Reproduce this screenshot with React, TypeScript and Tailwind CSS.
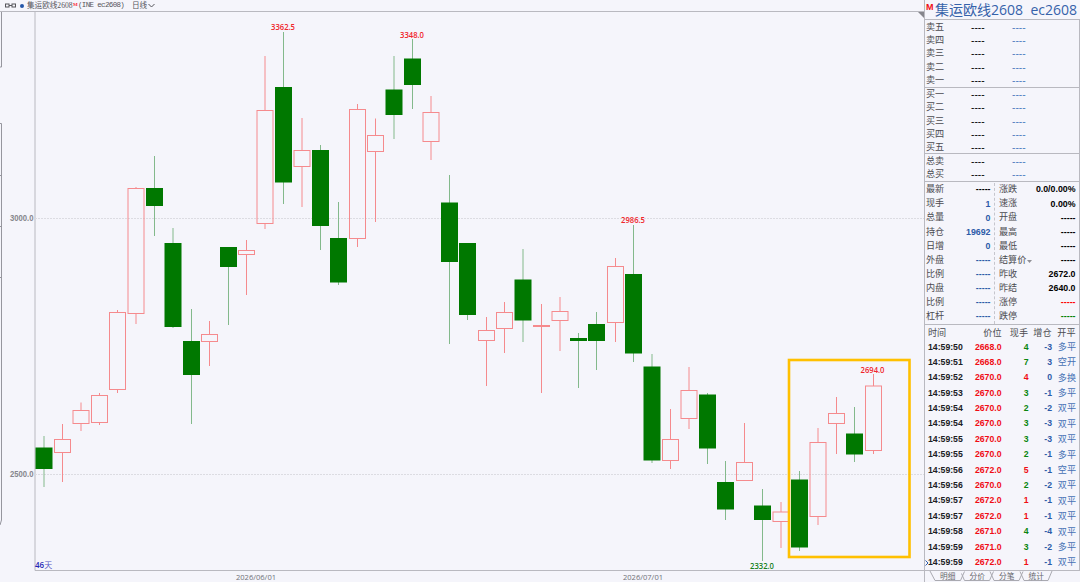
import React from 'react';
import clsx from 'clsx';

// x centre, high, body top, body bottom, low, direction
type Candle = [number, number, number, number, number, 'u' | 'd'];

const candles: Candle[] = [
  [44, 436, 447.5, 469, 487, 'd'],
  [62.5, 424, 439.5, 452.5, 482, 'u'],
  [81, 402.5, 410.5, 423.5, 431, 'u'],
  [99.5, 393, 395.5, 422.5, 425, 'u'],
  [117.5, 310, 312.5, 389.5, 393, 'u'],
  [136, 187, 188.5, 313.5, 324, 'u'],
  [154.5, 156, 188, 206, 236, 'd'],
  [173, 228, 243, 327, 328, 'd'],
  [191.5, 309, 341, 375, 424, 'd'],
  [209.5, 321, 334.5, 341.5, 366, 'u'],
  [228.5, 247, 247, 267, 325, 'd'],
  [246.5, 240, 250.5, 254.5, 295, 'u'],
  [265, 56, 110.5, 223.5, 229, 'u'],
  [283.5, 32, 87, 182.5, 204, 'd'],
  [302, 118, 150.5, 166.5, 207, 'u'],
  [320.5, 145, 150, 226, 250, 'd'],
  [338.5, 202, 238, 282.5, 285, 'd'],
  [357.5, 104, 109.5, 238.5, 247, 'u'],
  [375.5, 118.5, 135.5, 151.5, 222, 'u'],
  [394, 56, 89.5, 115, 139, 'd'],
  [412.5, 39, 58.5, 85, 109, 'd'],
  [431, 96, 112.5, 141.5, 160, 'u'],
  [449.5, 175, 202.5, 262, 344, 'd'],
  [467.5, 243, 243, 315, 320, 'd'],
  [486.5, 317, 330.5, 340.5, 386, 'u'],
  [504.5, 302, 312.5, 328.5, 353, 'u'],
  [523, 249, 279.5, 320.5, 342, 'd'],
  [541.5, 304, 325.5, 326.5, 393, 'u'],
  [560, 297, 311.5, 320.5, 351, 'u'],
  [578.5, 333, 338, 341, 388, 'd'],
  [596.5, 312, 324, 341, 370, 'd'],
  [615.5, 258, 266.5, 322.5, 342, 'u'],
  [633.5, 225, 274, 353.5, 362, 'd'],
  [652, 354, 366.5, 460.5, 463, 'd'],
  [670.5, 409, 439.5, 460.5, 469, 'u'],
  [689, 367, 390.5, 418.5, 429, 'u'],
  [707.5, 393, 394.5, 448.5, 464, 'd'],
  [725.5, 461, 482, 509.5, 520, 'd'],
  [744.5, 423, 462.5, 480.5, 481, 'u'],
  [762.5, 489, 505.5, 520, 561, 'd'],
  [781, 502, 512, 521.5, 548, 'u'],
  [799.5, 471, 479.5, 547.5, 551, 'd'],
  [818, 428, 442.5, 516.5, 525, 'u'],
  [836.5, 397, 413.5, 423.5, 454, 'u'],
  [854.5, 407, 433.5, 454.5, 462, 'd'],
  [873.5, 374, 386, 450.5, 454, 'u'],
];

const extremes = [
  { x: 283, y: 30, text: '3362.5', up: true },
  { x: 412, y: 37.5, text: '3348.0', up: true },
  { x: 633, y: 223, text: '2986.5', up: true },
  { x: 872.5, y: 373, text: '2694.0', up: true },
  { x: 762, y: 569, text: '2332.0', up: false },
];

const asks = ['卖五', '卖四', '卖三', '卖二', '卖一'];
const bids = ['买一', '买二', '买三', '买四', '买五'];
const totals = ['总卖', '总买'];

const BLUE = 'text-[#2d5ba8]';

const leftStats = [
  ['最新', '-----', 'text-black'],
  ['现手', '1', BLUE],
  ['总量', '0', BLUE],
  ['持仓', '19692', BLUE],
  ['日增', '0', BLUE],
  ['外盘', '-----', BLUE],
  ['比例', '-----', BLUE],
  ['内盘', '-----', BLUE],
  ['比例', '-----', BLUE],
  ['杠杆', '-----', BLUE],
];

const rightStats = [
  ['涨跌', '0.0/0.00%', 'text-black'],
  ['速涨', '0.00%', 'text-black'],
  ['开盘', '-----', 'text-black'],
  ['最高', '-----', 'text-black'],
  ['最低', '-----', 'text-black'],
  ['结算价', '-----', 'text-black'],
  ['昨收', '2672.0', 'text-black'],
  ['昨结', '2640.0', 'text-black'],
  ['涨停', '-----', 'text-[#ff0000]'],
  ['跌停', '-----', 'text-[#008000]'],
];

const ticks: [string, string, string, 'r' | 'g', string, string][] = [
  ['14:59:50', '2668.0', '4', 'g', '-3', '多平'],
  ['14:59:51', '2668.0', '7', 'g', '3', '空开'],
  ['14:59:52', '2670.0', '4', 'r', '0', '多换'],
  ['14:59:53', '2670.0', '3', 'g', '-1', '多平'],
  ['14:59:54', '2670.0', '2', 'g', '-2', '双平'],
  ['14:59:54', '2670.0', '3', 'g', '-3', '双平'],
  ['14:59:55', '2670.0', '3', 'g', '-3', '双平'],
  ['14:59:55', '2670.0', '2', 'g', '-1', '多平'],
  ['14:59:56', '2672.0', '5', 'r', '-1', '空平'],
  ['14:59:56', '2670.0', '2', 'g', '-2', '双平'],
  ['14:59:57', '2672.0', '1', 'r', '-1', '双平'],
  ['14:59:57', '2672.0', '1', 'r', '-1', '双平'],
  ['14:59:58', '2671.0', '4', 'g', '-4', '双平'],
  ['14:59:59', '2671.0', '3', 'g', '-2', '多平'],
  ['14:59:59', '2672.0', '1', 'r', '-1', '双平'],
];

const CandleShape: React.FC<{ candle: Candle }> = ({ candle }) => {
  const [x, high, top, bottom, low, dir] = candle;
  if (dir === 'd') {
    return (
      <g>
        <path d={`M${x} ${high}V${low}`} stroke="#83b98b" />
        <rect x={x - 8.5} y={top} width={17} height={bottom - top} fill="#007800" />
      </g>
    );
  }
  return (
    <g stroke="#f58a8d" fill="none">
      <path d={`M${x} ${high}V${top}M${x} ${bottom}V${low}`} />
      <rect x={x - 8} y={top} width={16} height={bottom - top} />
    </g>
  );
};

const Chart: React.FC = () => (
  <svg className="block shrink-0" width={924} height={571} viewBox="0 11 924 571">
    <g stroke="#b9b9c0" fill="none">
      <path d="M0 11.5H924" />
      <path d="M35 11V570.5H924" />
      <path d="M0 67H1.5V12M0 123.5H1.5V520L0 525" stroke="#96969e" />
      <path d="M0 175.5H1M0 226.5H1M0 277.5H1" stroke="#96969e" />
    </g>
    <path d="M918 12H924V18Z" fill="#85858c" />
    <path d="M35 218.5H924M35 474.5H924" stroke="#dcdce2" strokeDasharray="2 1" />
    {candles.map((candle) => (
      <CandleShape key={candle[0]} candle={candle} />
    ))}
    <rect x={789} y={360} width={120.5} height={197} fill="none" stroke="#ffc000" strokeWidth={2.6} />
    <g className="font-['Open_Sans',sans-serif] text-[8.2px] font-semibold" textAnchor="middle">
      {extremes.map((e) => (
        <text key={e.text} x={e.x} y={e.y} textLength={24} lengthAdjust="spacingAndGlyphs" fill={e.up ? '#f0262b' : '#16811c'}>
          {e.text}
        </text>
      ))}
    </g>
    <g className="font-['Liberation_Sans',sans-serif] text-[8.2px] font-bold" fill="#86868c">
      <text x={10} y={221.3} textLength={23.5} lengthAdjust="spacingAndGlyphs">3000.0</text>
      <text x={10} y={477.3} textLength={23.5} lengthAdjust="spacingAndGlyphs">2500.0</text>
    </g>
    <g className="font-['Open_Sans',sans-serif] text-[8px]" fill="#707078">
      <text x={236} y={579.6} textLength={40} lengthAdjust="spacingAndGlyphs">2026/06/01</text>
      <text x={623} y={579.6} textLength={40} lengthAdjust="spacingAndGlyphs">2026/07/01</text>
    </g>
    <text x={35} y={568} className="font-['Open_Sans','Noto_Sans_CJK_SC',sans-serif] text-[8px]" fill="#2525b5">
      <tspan className="font-semibold">46</tspan>
      <tspan fill="#5555c5">天</tspan>
    </text>
  </svg>
);

const TitleBar: React.FC = () => (
  <div className="flex h-[11px] items-center pl-[5px] text-[7.6px] leading-[11px] whitespace-pre text-[#55555b] font-['Liberation_Serif','Noto_Sans_CJK_SC',serif]">
    <svg width={11} height={5} viewBox="0 0 11 5" fill="none" stroke="#55555b">
      <rect x={0.5} y={1} width={3.5} height={3} />
      <rect x={7} y={1} width={3.5} height={3} />
      <path d="M4 2.5H7" />
    </svg>
    <span className="ml-[4px] size-[4px] rounded-full bg-[#2456a8]" />
    <span className="ml-[3px] w-[46px]">集运欧线2608</span>
    <span className="-mt-[3px] w-[5px] text-[5px] font-bold text-red-500">M</span>
    <span className="w-[54px] font-['Liberation_Mono',monospace] text-[7.5px] tracking-[-0.65px]">(INE ec2608)</span>
    <span className="w-[16px]">日线</span>
    <svg width={7} height={5} viewBox="0 0 7 5" fill="none" stroke="#55555b">
      <path d="M0.5 1L3.5 4L6.5 1" />
    </svg>
  </div>
);

const BookRows: React.FC<{ labels: string[]; className: string }> = ({ labels, className }) => (
  <div className={clsx('flex flex-col border-b border-[#b9b9c0]', className)}>
    {labels.map((label) => (
      <div key={label} className="flex h-[13.3px] shrink-0 items-center">
        <span className="w-[46px] pl-px">{label}</span>
        <span className="w-[41px] pt-px text-[10.3px] text-black">----</span>
        <span className="pt-px text-[10.3px] text-[#4e7dc0]">----</span>
      </div>
    ))}
  </div>
);

const Stats: React.FC = () => (
  <div className="flex h-[143px] border-b border-[#b9b9c0] pt-[0.8px]">
    <div className="w-[70px] border-r border-dashed border-[#c6c6cd] pr-[3.5px] pl-px">
      {leftStats.map(([label, value, color], i) => (
        <div key={i} className="flex h-[14.1px] items-center justify-between">
          <span>{label}</span>
          <span className={clsx('text-[8.8px] font-bold', color)}>{value}</span>
        </div>
      ))}
    </div>
    <div className="flex-1 pr-[3.5px] pl-[4px]">
      {rightStats.map(([label, value, color]) => (
        <div key={label} className="flex h-[14.1px] items-center justify-between">
          <span className="flex items-center">
            {label}
            {label === '结算价' && (
              <svg className="mt-[3px] ml-px" width={5} height={3} viewBox="0 0 5 3">
                <path d="M0 0H5L2.5 3Z" fill="#909096" />
              </svg>
            )}
          </span>
          <span className={clsx('text-[8.8px] font-bold', color)}>{value}</span>
        </div>
      ))}
    </div>
  </div>
);

const TickTable: React.FC = () => (
  <div className="h-[246px] border-b border-[#b9b9c0]">
    <div className="flex h-[14.2px] items-center pt-[2px] pl-[3px] text-right">
      <span className="w-[36px] text-left">时间</span>
      <span className="w-[37.5px]">价位</span>
      <span className="w-[26.5px]">现手</span>
      <span className="w-[23.5px]">增仓</span>
      <span className="w-[24px]">开平</span>
    </div>
    {ticks.map(([time, price, volume, side, change, kind], i) => (
      <div key={i} className="relative flex h-[15.4px] items-center pl-[3px] text-right text-[8.7px] font-bold">
        {i === ticks.length - 1 && (
          <svg className="absolute top-[5px] left-0" width={4} height={6} viewBox="0 0 4 6" fill="none" stroke="#2d5ba8">
            <path d="M0.5 0.5L3 3L0.5 5.5" />
          </svg>
        )}
        <span className="w-[36px] text-left text-[#202024]">{time}</span>
        <span className="w-[37.5px] text-[#f00c14]">{price}</span>
        <span className={clsx('w-[27px]', side === 'r' ? 'text-[#f00c14]' : 'text-[#0a850f]')}>{volume}</span>
        <span className={clsx('w-[23.5px]', BLUE)}>{change}</span>
        <span className="w-[24px] pt-px text-[9.1px] font-normal text-[#4571b5]">{kind}</span>
      </div>
    ))}
  </div>
);

const BottomTabs: React.FC = () => (
  <svg className="block overflow-visible" width={155} height={11} viewBox="925 571 155 11">
    <g fill="none" stroke="#aaaab1">
      <path d="M930 571L935 580.5H960.5L964.5 571.5" />
      <path d="M961.5 573.5L964.5 580.5H989.5L993.5 571.5" />
      <path d="M990 571.5L994 580.5H1019L1023 571.5" />
      <path d="M1020 571.5L1024 580.5H1048L1052 571" />
    </g>
    <g className="font-['Noto_Sans_CJK_SC',sans-serif] text-[7.7px]" fill="#65656b">
      <text x={940} y={578.5}>明细</text>
      <text x={969.5} y={578.5}>分价</text>
      <text x={999} y={578.5}>分笔</text>
      <text x={1028.5} y={578.5}>统计</text>
    </g>
  </svg>
);

const QuotePanel: React.FC = () => (
  <div className="h-[582px] w-[156px] border-l border-[#b9b9c0] text-[9.1px] leading-none text-[#4b4b50] font-['Liberation_Sans','Noto_Sans_CJK_SC',sans-serif]">
    <div className="flex h-[19px] whitespace-pre text-[#3562aa]">
      <span className="w-[10px] pt-[3px] pl-px text-[9px] font-bold text-[#f00c14]">M</span>
      <span className="w-[95.5px] pt-[3px] text-[14px] font-['Open_Sans','Noto_Sans_CJK_SC',sans-serif]">集运欧线2608</span>
      <span className="pt-[3px] text-[14px] font-['Open_Sans',sans-serif]">ec2608</span>
    </div>
    <div className="border-t border-r border-[#b9b9c0]">
      <BookRows labels={asks} className="h-[68px] pt-[0.7px]" />
      <BookRows labels={bids} className="h-[66px]" />
      <BookRows labels={totals} className="h-[28px] pt-[0.8px]" />
      <Stats />
      <TickTable />
    </div>
    <BottomTabs />
  </div>
);

const App: React.FC = () => {
  return (
    <div className="flex h-[582px] w-[1080px] overflow-hidden bg-[#f5f5fb]">
      <div className="w-[924px]">
        <TitleBar />
        <Chart />
      </div>
      <QuotePanel />
    </div>
  );
};

export default App;
